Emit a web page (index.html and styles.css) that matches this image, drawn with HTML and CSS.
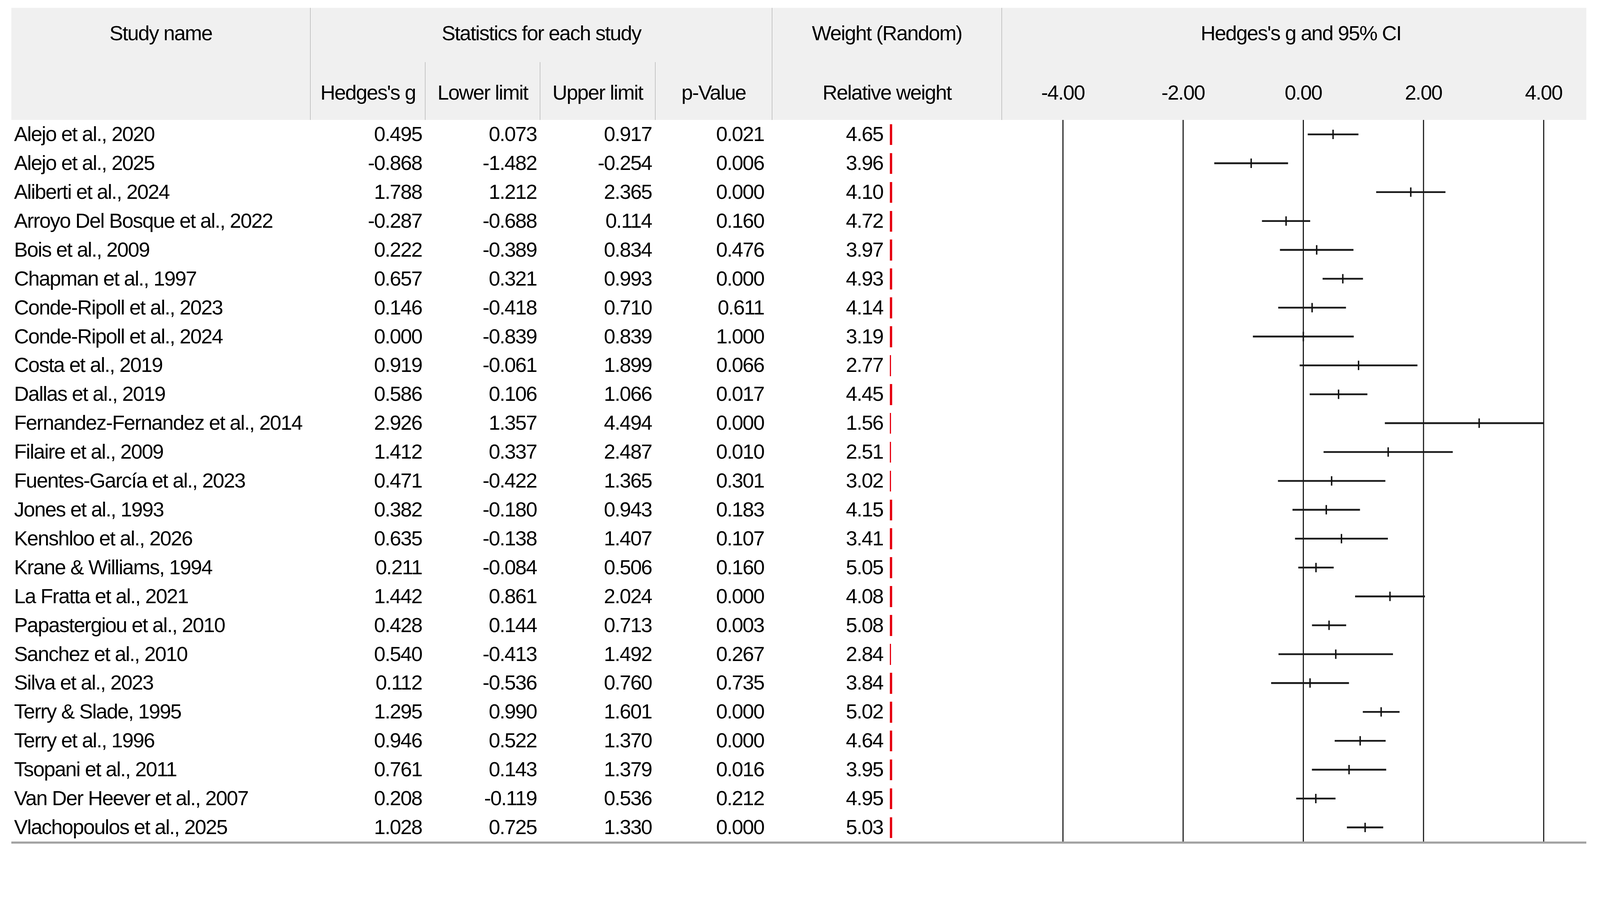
FILE: index.html
```html
<!DOCTYPE html>
<html lang="en">
<head>
<meta charset="utf-8">
<title>Forest plot – Hedges's g</title>
<link rel="stylesheet" href="styles.css">
</head>
<body>
<div class="forest">
  <div class="hd hd-top div-r center">Study name</div>
  <div class="hd hd-top span-stats center">Statistics for each study</div>
  <div class="hd hd-top div-l div-r center">Weight (Random)</div>
  <div class="hd hd-top center title">Hedges's g and 95% CI</div>

  <div class="hd hd-sub div-r"></div>
  <div class="hd hd-sub div-r center">Hedges's g</div>
  <div class="hd hd-sub div-r center">Lower limit</div>
  <div class="hd hd-sub div-r center">Upper limit</div>
  <div class="hd hd-sub center">p-Value</div>
  <div class="hd hd-sub div-l div-r center">Relative weight</div>
  <div class="hd hd-sub axis"><span>-4.00</span><span>-2.00</span><span>0.00</span><span>2.00</span><span>4.00</span></div>

  <svg class="plot" viewBox="0 0 1619 2000" preserveAspectRatio="none" xmlns="http://www.w3.org/2000/svg">
    <g class="grid-lines">
      <line x1="169" y1="0" x2="169" y2="2000"/>
      <line x1="502" y1="0" x2="502" y2="2000"/>
      <line x1="835" y1="0" x2="835" y2="2000"/>
      <line x1="1168" y1="0" x2="1168" y2="2000"/>
      <line x1="1501" y1="0" x2="1501" y2="2000"/>
    </g>
    <path class="ci" d="M847.2 40H987.7M588.2 120H792.7M1036.8 200H1228.8M720.4 280H854M770.2 360H973.9M888.4 440H1000.3M765.4 520H953.2M695.3 600H974.7M824.8 680H1151.2M852.6 760H1012.5M1060.9 840H1501M891.1 920H1249.1M764.7 1000H1062.3M805 1080H992M812 1160H1069.3M821 1240H919.2M978.4 1320H1172M859 1400H953.7M766.2 1480H1083.4M745.8 1560H961.5M999.8 1640H1101.6M921.9 1720H1063.1M858.8 1800H1064.6M815.2 1880H924.2M955.7 1960H1056.4"/>
    <path class="pt" d="M917.4 27V53M690.5 107V133M1132.7 187V213M787.2 267V293M872 347V373M944.4 427V453M859.3 507V533M835 587V613M988 667V693M932.6 747V773M1322.2 827V853M1070.1 907V933M913.4 987V1013M898.6 1067V1093M940.7 1147V1173M870.1 1227V1253M1075.1 1307V1333M906.3 1387V1413M924.9 1467V1493M853.6 1547V1573M1050.6 1627V1653M992.5 1707V1733M961.7 1787V1813M869.6 1867V1893M1006.2 1947V1973"/>
  </svg>

  <div class="c name">Alejo et al., 2020</div><div class="c n">0.495</div><div class="c n">0.073</div><div class="c n">0.917</div><div class="c n p">0.021</div><div class="c w"><span class="wv">4.65</span><span class="bar thick"></span></div>
  <div class="c name">Alejo et al., 2025</div><div class="c n">-0.868</div><div class="c n">-1.482</div><div class="c n">-0.254</div><div class="c n p">0.006</div><div class="c w"><span class="wv">3.96</span><span class="bar thick"></span></div>
  <div class="c name">Aliberti et al., 2024</div><div class="c n">1.788</div><div class="c n">1.212</div><div class="c n">2.365</div><div class="c n p">0.000</div><div class="c w"><span class="wv">4.10</span><span class="bar thick"></span></div>
  <div class="c name">Arroyo Del Bosque et al., 2022</div><div class="c n">-0.287</div><div class="c n">-0.688</div><div class="c n">0.114</div><div class="c n p">0.160</div><div class="c w"><span class="wv">4.72</span><span class="bar thick"></span></div>
  <div class="c name">Bois et al., 2009</div><div class="c n">0.222</div><div class="c n">-0.389</div><div class="c n">0.834</div><div class="c n p">0.476</div><div class="c w"><span class="wv">3.97</span><span class="bar thick"></span></div>
  <div class="c name">Chapman et al., 1997</div><div class="c n">0.657</div><div class="c n">0.321</div><div class="c n">0.993</div><div class="c n p">0.000</div><div class="c w"><span class="wv">4.93</span><span class="bar thick"></span></div>
  <div class="c name">Conde-Ripoll et al., 2023</div><div class="c n">0.146</div><div class="c n">-0.418</div><div class="c n">0.710</div><div class="c n p">0.611</div><div class="c w"><span class="wv">4.14</span><span class="bar thick"></span></div>
  <div class="c name">Conde-Ripoll et al., 2024</div><div class="c n">0.000</div><div class="c n">-0.839</div><div class="c n">0.839</div><div class="c n p">1.000</div><div class="c w"><span class="wv">3.19</span><span class="bar thick"></span></div>
  <div class="c name">Costa et al., 2019</div><div class="c n">0.919</div><div class="c n">-0.061</div><div class="c n">1.899</div><div class="c n p">0.066</div><div class="c w"><span class="wv">2.77</span><span class="bar"></span></div>
  <div class="c name">Dallas et al., 2019</div><div class="c n">0.586</div><div class="c n">0.106</div><div class="c n">1.066</div><div class="c n p">0.017</div><div class="c w"><span class="wv">4.45</span><span class="bar thick"></span></div>
  <div class="c name">Fernandez-Fernandez et al., 2014</div><div class="c n">2.926</div><div class="c n">1.357</div><div class="c n">4.494</div><div class="c n p">0.000</div><div class="c w"><span class="wv">1.56</span><span class="bar"></span></div>
  <div class="c name">Filaire et al., 2009</div><div class="c n">1.412</div><div class="c n">0.337</div><div class="c n">2.487</div><div class="c n p">0.010</div><div class="c w"><span class="wv">2.51</span><span class="bar"></span></div>
  <div class="c name">Fuentes-García et al., 2023</div><div class="c n">0.471</div><div class="c n">-0.422</div><div class="c n">1.365</div><div class="c n p">0.301</div><div class="c w"><span class="wv">3.02</span><span class="bar"></span></div>
  <div class="c name">Jones et al., 1993</div><div class="c n">0.382</div><div class="c n">-0.180</div><div class="c n">0.943</div><div class="c n p">0.183</div><div class="c w"><span class="wv">4.15</span><span class="bar thick"></span></div>
  <div class="c name">Kenshloo et al., 2026</div><div class="c n">0.635</div><div class="c n">-0.138</div><div class="c n">1.407</div><div class="c n p">0.107</div><div class="c w"><span class="wv">3.41</span><span class="bar thick"></span></div>
  <div class="c name">Krane &amp; Williams, 1994</div><div class="c n">0.211</div><div class="c n">-0.084</div><div class="c n">0.506</div><div class="c n p">0.160</div><div class="c w"><span class="wv">5.05</span><span class="bar thick"></span></div>
  <div class="c name">La Fratta et al., 2021</div><div class="c n">1.442</div><div class="c n">0.861</div><div class="c n">2.024</div><div class="c n p">0.000</div><div class="c w"><span class="wv">4.08</span><span class="bar thick"></span></div>
  <div class="c name">Papastergiou et al., 2010</div><div class="c n">0.428</div><div class="c n">0.144</div><div class="c n">0.713</div><div class="c n p">0.003</div><div class="c w"><span class="wv">5.08</span><span class="bar thick"></span></div>
  <div class="c name">Sanchez et al., 2010</div><div class="c n">0.540</div><div class="c n">-0.413</div><div class="c n">1.492</div><div class="c n p">0.267</div><div class="c w"><span class="wv">2.84</span><span class="bar"></span></div>
  <div class="c name">Silva et al., 2023</div><div class="c n">0.112</div><div class="c n">-0.536</div><div class="c n">0.760</div><div class="c n p">0.735</div><div class="c w"><span class="wv">3.84</span><span class="bar thick"></span></div>
  <div class="c name">Terry &amp; Slade, 1995</div><div class="c n">1.295</div><div class="c n">0.990</div><div class="c n">1.601</div><div class="c n p">0.000</div><div class="c w"><span class="wv">5.02</span><span class="bar thick"></span></div>
  <div class="c name">Terry et al., 1996</div><div class="c n">0.946</div><div class="c n">0.522</div><div class="c n">1.370</div><div class="c n p">0.000</div><div class="c w"><span class="wv">4.64</span><span class="bar thick"></span></div>
  <div class="c name">Tsopani et al., 2011</div><div class="c n">0.761</div><div class="c n">0.143</div><div class="c n">1.379</div><div class="c n p">0.016</div><div class="c w"><span class="wv">3.95</span><span class="bar thick"></span></div>
  <div class="c name">Van Der Heever et al., 2007</div><div class="c n">0.208</div><div class="c n">-0.119</div><div class="c n">0.536</div><div class="c n p">0.212</div><div class="c w"><span class="wv">4.95</span><span class="bar thick"></span></div>
  <div class="c name">Vlachopoulos et al., 2025</div><div class="c n">1.028</div><div class="c n">0.725</div><div class="c n">1.330</div><div class="c n p">0.000</div><div class="c w"><span class="wv">5.03</span><span class="bar thick"></span></div>

  <div class="foot"></div>
</div>
</body>
</html>
```

FILE: styles.css
```css
html, body {
  margin: 0;
  padding: 0;
  background: #ffffff;
}

body {
  font-family: "Liberation Sans", Arial, sans-serif;
  font-size: 52.7px;
  letter-spacing: -1.85px;
  color: #000000;
}

.forest {
  display: grid;
  grid-template-columns: 766.9px 293.8px 293.8px 294.7px 298.4px 588.6px 1495.9px;
  grid-template-rows: 138.6px 147.8px repeat(25, 73.92px) 5.5px;
  width: 4032.1px;
  margin: 20.3px 0 0 28.6px;
}

.hd {
  background: #f0f0f0;
  box-sizing: border-box;
  white-space: nowrap;
}

.hd-top {
  display: flex;
  align-items: center;
  padding-bottom: 11px;
}

.hd-sub {
  display: flex;
  align-items: center;
  padding-top: 8.3px;
}

.center {
  justify-content: center;
}

.span-stats {
  grid-column: span 4;
}

.div-r {
  border-right: 1.85px solid #a0a0a0;
}

.div-l {
  border-left: 1.85px solid #a0a0a0;
}

.title {
  padding-left: 35px;
}

.axis {
  padding-left: 63.8px;
  gap: 122.9px;
}

.axis span {
  width: 184.8px;
  flex: none;
  text-align: center;
}

.plot {
  grid-column: 7;
  grid-row: 3 / span 25;
  display: block;
  width: 1495.9px;
  height: 1847.9px;
}

.grid-lines line {
  stroke: #111111;
  stroke-width: 3;
}

.ci {
  fill: none;
  stroke: #1a1a1a;
  stroke-width: 5;
}

.pt {
  fill: none;
  stroke: #111111;
  stroke-width: 4;
}

.c {
  display: flex;
  align-items: center;
  white-space: nowrap;
  box-sizing: border-box;
  padding-bottom: 1.8px;
}

.name {
  padding-left: 7.4px;
}

.n {
  justify-content: flex-end;
  padding-right: 9.2px;
}

.n.p {
  padding-right: 20.3px;
}

.w {
  justify-content: flex-start;
}

.wv {
  width: 284.6px;
  text-align: right;
  flex: none;
}

.bar {
  flex: none;
  width: 2.8px;
  height: 53.6px;
  margin-left: 17.6px;
  margin-top: 3.7px;
  background: #e60012;
}

.bar.thick {
  width: 5.5px;
}

.foot {
  grid-column: 1 / -1;
  background: #a3a3a3;
  border-bottom: 1.85px solid #d6d6d6;
}
```
